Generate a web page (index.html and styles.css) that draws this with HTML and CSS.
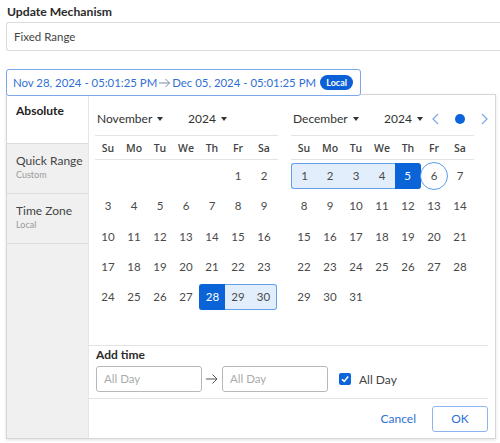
FILE: index.html
```html
<!DOCTYPE html>
<html>
<head>
<meta charset="utf-8">
<link rel="stylesheet" href="styles.css">
</head>
<body>
<div class="page">
  <div class="field-label">Update Mechanism</div>
  <div class="select-box">Fixed Range</div>

  <div class="range-field">
    <span class="range-text">Nov 28, 2024 - 05:01:25 PM</span>
    <svg class="range-arrow" width="13" height="10" viewBox="0 0 13 10"><path d="M1 5H11.5M7.5 1L11.5 5L7.5 9" fill="none" stroke="#7d8aa0" stroke-width="1"/></svg>
    <span class="range-text">Dec 05, 2024 - 05:01:25 PM</span>
    <span class="badge">Local</span>
  </div>

  <div class="popup">
    <div class="sidebar">
      <div class="side-item active"><div class="side-title bold">Absolute</div></div>
      <div class="side-item"><div class="side-title">Quick Range</div><div class="side-sub">Custom</div></div>
      <div class="side-item"><div class="side-title">Time Zone</div><div class="side-sub">Local</div></div>
    </div>
    <div class="main">
      <div class="calendars">
        <div class="cal">
          <div class="cal-head">
            <span class="sel month">November <i class="caret"></i></span>
            <span class="sel year">2024 <i class="caret"></i></span>
          </div>
          <div class="weekdays"><span>Su</span><span>Mo</span><span>Tu</span><span>We</span><span>Th</span><span>Fr</span><span>Sa</span></div>
          <div class="days">
            <span></span><span></span><span></span><span></span><span></span><span>1</span><span>2</span>
            <span>3</span><span>4</span><span>5</span><span>6</span><span>7</span><span>8</span><span>9</span>
            <span>10</span><span>11</span><span>12</span><span>13</span><span>14</span><span>15</span><span>16</span>
            <span>17</span><span>18</span><span>19</span><span>20</span><span>21</span><span>22</span><span>23</span>
            <span>24</span><span>25</span><span>26</span><span>27</span><span class="in-range start sel-day first">28</span><span class="in-range">29</span><span class="in-range last">30</span>
          </div>
        </div>
        <div class="cal">
          <div class="cal-head">
            <span class="sel month">December <i class="caret"></i></span>
            <span class="sel year">2024 <i class="caret"></i></span>
            <span class="nav">
              <svg width="10" height="14" viewBox="0 0 10 14"><polyline points="7,2 2,7 7,12" fill="none" stroke="#7aa6ea" stroke-width="1.2"/></svg>
              <span class="dot"></span>
              <svg width="10" height="14" viewBox="0 0 10 14"><polyline points="3,2 8,7 3,12" fill="none" stroke="#7aa6ea" stroke-width="1.2"/></svg>
            </span>
          </div>
          <div class="weekdays"><span>Su</span><span>Mo</span><span>Tu</span><span>We</span><span>Th</span><span>Fr</span><span>Sa</span></div>
          <div class="days">
            <span class="in-range first">1</span><span class="in-range">2</span><span class="in-range">3</span><span class="in-range">4</span><span class="in-range sel-day last">5</span><span class="today">6</span><span>7</span>
            <span>8</span><span>9</span><span>10</span><span>11</span><span>12</span><span>13</span><span>14</span>
            <span>15</span><span>16</span><span>17</span><span>18</span><span>19</span><span>20</span><span>21</span>
            <span>22</span><span>23</span><span>24</span><span>25</span><span>26</span><span>27</span><span>28</span>
            <span>29</span><span>30</span><span>31</span>
          </div>
        </div>
      </div>
      <div class="add-time">
        <div class="add-label">Add time</div>
        <div class="time-row">
          <div class="time-input">All Day</div>
          <svg class="time-arrow" width="20" height="14" viewBox="0 0 20 14"><path d="M4 7H15M10.5 2.5L15 7L10.5 11.5" fill="none" stroke="#555" stroke-width="1"/></svg>
          <div class="time-input">All Day</div>
          <span class="checkbox"><svg width="12" height="12" viewBox="0 0 12 12"><polyline points="3,6.2 5.2,8.4 9.2,3.6" fill="none" stroke="#fff" stroke-width="1.6"/></svg></span>
          <span class="check-label">All Day</span>
        </div>
      </div>
      <div class="footer">
        <span class="cancel">Cancel</span>
        <span class="ok">OK</span>
      </div>
    </div>
  </div>
</div>
</body>
</html>
```
FILE: styles.css
```css
* { box-sizing: border-box; }
html, body { margin: 0; padding: 0; background: #fff; overflow: hidden; }
body { font-family: "Lato", "Open Sans", sans-serif; color: #333; font-size: 12px; }
.page { padding: 3px 0 0 6px; width: 500px; overflow: hidden; height: 443px; }
.field-label { font-weight: 700; font-size: 12.2px; color: #2b2b2b; padding-left: 1px; height: 19px; line-height: 18px; }
.select-box { height: 29px; border: 1px solid #dcdcdc; border-right: none; border-radius: 3px 0 0 3px; padding-left: 7px; line-height: 27px; color: #444; font-size: 11.5px; width: 494px; }
.range-field { margin-top: 18px; width: 355px; height: 27px; border: 1px solid #7aa8ea; border-radius: 3px; display: flex; align-items: center; padding-left: 6px; color: #2f6fd3; font-size: 11.4px; position: relative; z-index: 2; background: #fff; white-space: nowrap; }
.range-text, .range-arrow { flex-shrink: 0; }
.range-arrow { margin: 0 1px 0 1px; }
.badge { background: #0b5fd7; color: #fff; font-weight: 700; font-size: 9px; border-radius: 8px; padding: 0 6px; height: 15px; line-height: 15px; margin-left: auto; margin-right: 7px; }
.popup { margin-top: -2px; width: 490px; height: 345px; border: 1px solid #d6d6d6; display: flex; background: #fff; box-shadow: 0 1px 3px rgba(0,0,0,0.12); }
.sidebar { width: 82px; background: #f0f0f0; border-right: 1px solid #e6e6e6; }
.side-item { height: 50px; border-bottom: 1px solid #dcdcdc; padding: 9px 0 0 9px; }
.side-item.active { background: #fff; height: 49px; padding-top: 8px; }
.side-title { font-size: 12px; color: #444; line-height: 16px; }
.side-title.bold { font-weight: 700; color: #222; }
.side-sub { font-size: 9px; color: #9a9a9a; line-height: 11px; }
.main { flex: 1; display: flex; flex-direction: column; }
.calendars { display: flex; gap: 13px; padding-left: 6px; height: 250px; }
.cal { width: 183px; }
.cal-head { height: 40px; display: flex; align-items: center; padding-top: 7px; padding-left: 2px; width: 210px; }
.sel { font-size: 12px; color: #333; display: inline-flex; align-items: center; }
.month { width: 91px; }
.year { width: 47px; }
.caret { display: inline-block; width: 0; height: 0; border-left: 3.5px solid transparent; border-right: 3.5px solid transparent; border-top: 4px solid #333; margin-left: 5px; }
.nav { display: flex; align-items: center; }
.nav svg { display: block; }
.dot { width: 10px; height: 10px; border-radius: 50%; background: #0b64d9; margin: 0 14px 0 14px; }
.weekdays { display: grid; grid-template-columns: repeat(7, 26px); height: 25px; border-top: 1px solid #e3e3e3; border-bottom: 1px solid #e3e3e3; align-items: center; }
.weekdays span { text-align: center; font-family: "Open Sans", "Lato", sans-serif; font-size: 10.5px; font-weight: 600; color: #444; }
.days { display: grid; grid-template-columns: repeat(7, 26px); grid-auto-rows: 30.25px; padding-top: 1px; align-items: center; }
.days span { height: 26px; line-height: 26px; text-align: center; font-size: 11.5px; color: #4a4a4a; position: relative; }
.days .in-range { background: #e2eefc; border-top: 1px solid #62a0ec; border-bottom: 1px solid #62a0ec; line-height: 24px; }
.days .first { border-left: 1px solid #62a0ec; border-radius: 3px 0 0 3px; }
.days .last { border-right: 1px solid #62a0ec; border-radius: 0 3px 3px 0; }
.days .sel-day { background: #0a64d8; color: #fff; border-color: #0a64d8; }
.days .today { border: 1px solid #5d9cec; border-radius: 50%; width: 28px; height: 28px; line-height: 26px; margin-left: -1px; }
.add-time { border-top: 1px solid #e3e3e3; margin: 0 7px 0 0; padding-left: 7px; height: 54px; border-bottom: 1px solid #e3e3e3; }
.add-label { font-weight: 700; font-size: 12px; color: #2b2b2b; line-height: 16px; margin-top: 1px; }
.time-row { display: flex; align-items: center; margin-top: 3px; }
.time-input { width: 106px; height: 26px; border: 1px solid #b8b8b8; border-radius: 3px; padding-left: 7px; line-height: 24px; color: #ababab; font-size: 11.5px; }
.time-arrow { display: block; }
.checkbox { width: 12px; height: 12px; background: #0c66da; border-radius: 2px; margin-left: 11px; display: flex; }
.check-label { margin-left: 8px; font-size: 12px; color: #444; }
.footer { flex: 1; display: flex; justify-content: flex-end; align-items: center; padding-right: 7px; }
.cancel { color: #2f6fd3; font-size: 12px; margin-right: 16px; }
.ok { width: 56px; height: 26px; border: 1px solid #8cb5ef; border-radius: 3px; color: #2f6fd3; text-align: center; line-height: 24px; font-size: 12px; }
```
